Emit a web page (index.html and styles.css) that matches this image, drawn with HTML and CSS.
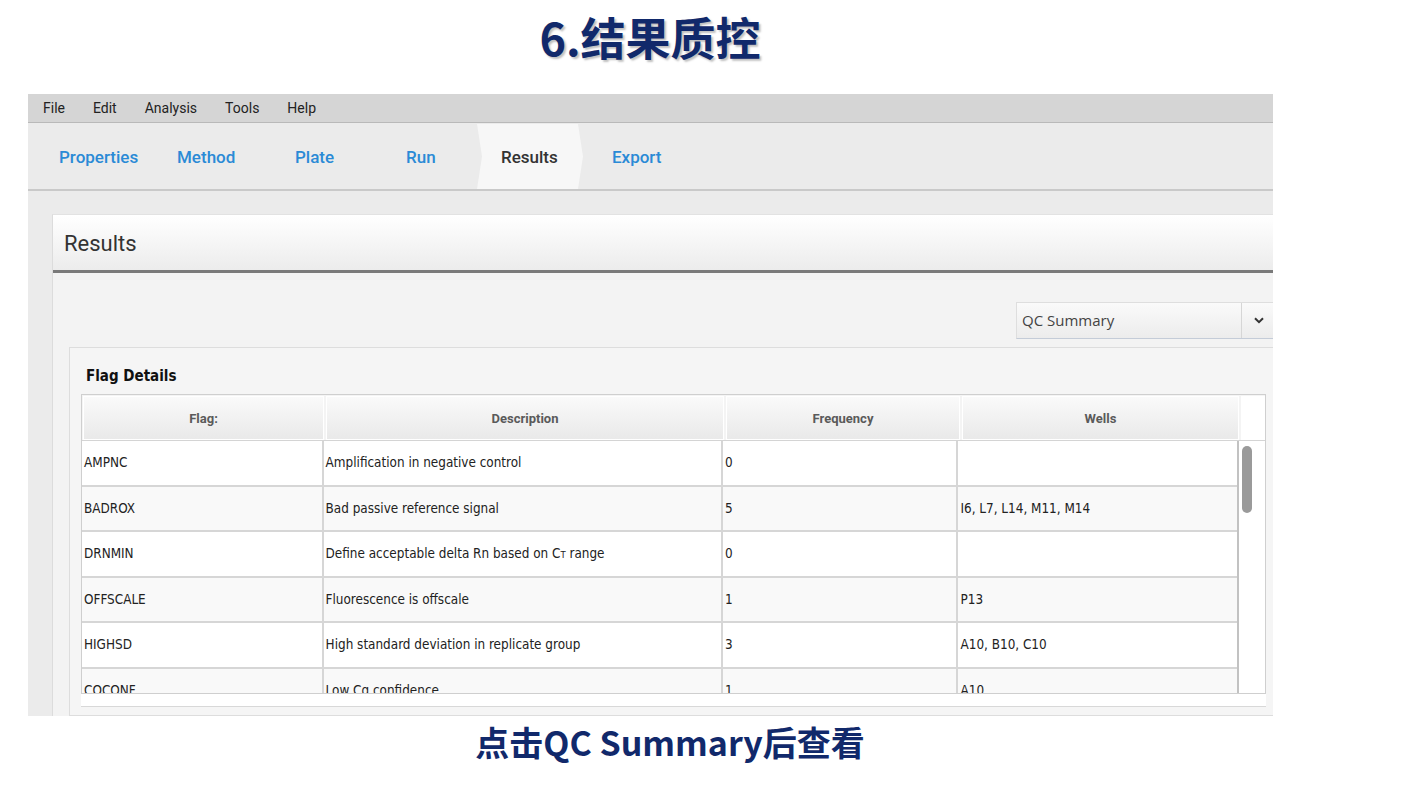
FILE: index.html
```html
<!DOCTYPE html>
<html>
<head>
<meta charset="utf-8">
<link rel="stylesheet" href="styles.css">
</head>
<body>
<div class="title">6.结果质控</div>
<div class="app">
  <div class="menubar">
    <span class="menu">File</span>
    <span class="menu">Edit</span>
    <span class="menu">Analysis</span>
    <span class="menu">Tools</span>
    <span class="menu">Help</span>
  </div>
  <div class="nav">
    <span class="nav-item w-prop">Properties</span>
    <span class="nav-item w-meth">Method</span>
    <span class="nav-item w-plate">Plate</span>
    <span class="nav-item w-run">Run</span>
    <span class="nav-item active">Results</span>
    <span class="nav-item w-exp">Export</span>
  </div>
  <div class="content">
    <div class="panel">
      <div class="panel-head">Results</div>
      <div class="panel-body">
        <div class="select-row">
          <div class="select">
            <span class="select-text">QC Summary</span>
            <span class="select-btn"><svg width="10" height="7" viewBox="0 0 10 7"><path d="M1 1.2 L5 5.2 L9 1.2" fill="none" stroke="#333" stroke-width="2"/></svg></span>
          </div>
        </div>
        <div class="flagbox">
          <div class="flag-title">Flag Details</div>
          <div class="table">
            <div class="thead">
              <div class="th c1">Flag:</div>
              <div class="th c2">Description</div>
              <div class="th c3">Frequency</div>
              <div class="th c4">Wells</div>
              <div class="th-rest"></div>
            </div>
            <div class="tbody">
              <div class="rows">
                <div class="tr"><div class="td c1">AMPNC</div><div class="td c2">Amplification in negative control</div><div class="td c3">0</div><div class="td c4"></div></div>
                <div class="tr alt"><div class="td c1">BADROX</div><div class="td c2">Bad passive reference signal</div><div class="td c3">5</div><div class="td c4">I6, L7, L14, M11, M14</div></div>
                <div class="tr"><div class="td c1">DRNMIN</div><div class="td c2">Define acceptable delta Rn based on C<span class="sc">T</span>&nbsp;range</div><div class="td c3">0</div><div class="td c4"></div></div>
                <div class="tr alt"><div class="td c1">OFFSCALE</div><div class="td c2">Fluorescence is offscale</div><div class="td c3">1</div><div class="td c4">P13</div></div>
                <div class="tr"><div class="td c1">HIGHSD</div><div class="td c2">High standard deviation in replicate group</div><div class="td c3">3</div><div class="td c4">A10, B10, C10</div></div>
                <div class="tr alt"><div class="td c1">COCONF</div><div class="td c2">Low Cq confidence</div><div class="td c3">1</div><div class="td c4">A10</div></div>
              </div>
              <div class="vscroll"><div class="thumb"></div></div>
            </div>
          </div>
          <div class="hscroll"></div>
        </div>
      </div>
    </div>
  </div>
</div>
<div class="caption">点击QC Summary后查看</div>
</body>
</html>
```

FILE: styles.css
```css
* { box-sizing: border-box; }
body {
  margin: 0;
  background: #ffffff;
  width: 1407px;
  height: 807px;
  overflow: hidden;
}
.title {
  width: 1300px;
  height: 94px;
  line-height: 74px;
  text-align: center;
  font-family: "Noto Sans CJK SC", "Noto Sans", sans-serif;
  font-weight: 700;
  font-size: 45px;
  color: #11296b;
  text-shadow: 2px 2px 2px rgba(0,0,0,0.25);
}
.caption {
  width: 1340px;
  height: 91px;
  line-height: 52px;
  text-align: center;
  font-family: "Noto Sans CJK SC", "Noto Sans", sans-serif;
  font-weight: 700;
  font-size: 34px;
  color: #11296b;
}
.app {
  margin-left: 28px;
  width: 1245px;
  height: 622px;
  overflow: hidden;
  background: #ebebeb;
  display: flex;
  flex-direction: column;
}
.menubar {
  height: 29px;
  flex: none;
  background: #d5d5d5;
  border-bottom: 1px solid #b9b9b9;
  display: flex;
  align-items: center;
  padding-left: 15px;
  gap: 28px;
  font-family: Roboto, "Liberation Sans", sans-serif;
  font-size: 14px;
  color: #222;
}
.nav {
  height: 68px;
  flex: none;
  border-bottom: 2px solid #c9c9c9;
  display: flex;
  align-items: stretch;
  padding-left: 31px;
  padding-top: 2px;
  padding-bottom: 0;
  font-family: Roboto, "Liberation Sans", sans-serif;
  font-size: 17px;
  font-weight: 500;
  color: #2a8ad6;
}
.nav-item { display: flex; align-items: center; }
.w-prop { width: 118px; }
.w-meth { width: 118px; }
.w-plate { width: 111px; }
.w-run { width: 71px; }
.w-exp { padding-left: 29px; }
.nav-item.active {
  width: 106px;
  padding-left: 24px;
  color: #333;
  background: #f7f7f7;
  margin-top: -1px;
  clip-path: polygon(0 0, calc(100% - 5px) 0, 100% 50%, calc(100% - 5px) 100%, 0 100%, 5px 50%);
}
.content {
  flex: 1;
  padding: 23px 0 0 24px;
  overflow: hidden;
}
.panel {
  width: 1238px;
  height: 100%;
  background: #f3f3f3;
  border-left: 1px solid #dcdcdc;
  border-top: 1px solid #e2e2e2;
  display: flex;
  flex-direction: column;
}
.panel-head {
  height: 58px;
  flex: none;
  background: linear-gradient(#ffffff, #ececec);
  border-bottom: 3px solid #7a7a7a;
  padding-left: 11px;
  padding-top: 2px;
  display: flex;
  align-items: center;
  font-family: Roboto, "Liberation Sans", sans-serif;
  font-size: 22px;
  color: #333;
}
.panel-body {
  flex: 1;
  padding: 29px 14px 0 16px;
  display: flex;
  flex-direction: column;
}
.select-row {
  display: flex;
  justify-content: flex-end;
  height: 45px;
  flex: none;
}
.select {
  width: 260px;
  height: 37px;
  display: flex;
  background: linear-gradient(#fafafa, #ececec);
  border: 1px solid #dedede;
  border-bottom: 1px solid #c4ccd8;
  font-family: "Open Sans", "Noto Sans", sans-serif;
  font-size: 15px;
  color: #444;
}
.select-text { flex: 1; display: flex; align-items: center; padding-left: 5px; padding-bottom: 2px; }
.select-btn {
  width: 34px;
  border-left: 1px solid #d6d6d6;
  display: flex;
  align-items: center;
  justify-content: center;
}
.flagbox {
  flex: 1;
  border: 1px solid #dddddd;
  background: #f5f5f5;
  padding: 0 9px 0 11px;
  display: flex;
  flex-direction: column;
}
.flag-title {
  height: 46px;
  flex: none;
  padding-left: 5px;
  padding-top: 19px;
  font-family: "DejaVu Sans Condensed", "DejaVu Sans", sans-serif;
  font-stretch: condensed;
  font-weight: 700;
  font-size: 15px;
  color: #111;
}
.table {
  height: 300px;
  flex: none;
  border: 1px solid #cfcfcf;
  background: #ffffff;
  display: flex;
  flex-direction: column;
}
.thead {
  height: 46px;
  flex: none;
  display: flex;
  padding: 1px 0 0 1px;
  border-bottom: 1px solid #d4d4d4;
  background: #f4f4f4;
}
.th {
  height: 44px;
  background: linear-gradient(#fafafa, #e9e9e9);
  border: 1px solid #ffffff;
  margin-right: 2px;
  display: flex;
  align-items: center;
  justify-content: center;
  font-family: Roboto, "Liberation Sans", sans-serif;
  font-weight: 700;
  font-size: 13px;
  color: #5a5a5a;
}
.th.c1 { width: 241px; }
.th.c2 { width: 398px; }
.th.c3 { width: 234px; }
.th.c4 { width: 277px; }
.th-rest { flex: 1; background: #ffffff; }
.tbody {
  flex: 1;
  display: flex;
  overflow: hidden;
}
.rows { width: 1157px; flex: none; border-right: 2px solid #c2c2c2; overflow: hidden; }
.tr {
  height: 45.5px;
  display: flex;
  border-bottom: 2px solid #d6d6d6;
  background: #ffffff;
}
.tr.alt { background: #f9f9f9; }
.td {
  display: flex;
  align-items: center;
  padding-left: 2px;
  padding-top: 0;
  border-right: 2px solid #d6d6d6;
  font-family: "DejaVu Sans Condensed", "DejaVu Sans", sans-serif;
  font-stretch: condensed;
  font-size: 13.4px;
  color: #222;
  white-space: nowrap;
}
.td.c1 { width: 242px; }
.td.c2 { width: 400px; }
.td.c3 { width: 236px; }
.td.c4 { width: 279px; border-right: none; }
.sc { font-size: 9.5px; position: relative; top: 1px; }
.vscroll {
  flex: 1;
  background: #ffffff;
  padding: 5px 0 0 3px;
}
.thumb {
  width: 10px;
  height: 67px;
  border-radius: 5px;
  background: #9a9a9a;
}
.hscroll {
  height: 13px;
  flex: none;
  background: #ffffff;
  border-bottom: 1px solid #d8d8d8;
}
```
